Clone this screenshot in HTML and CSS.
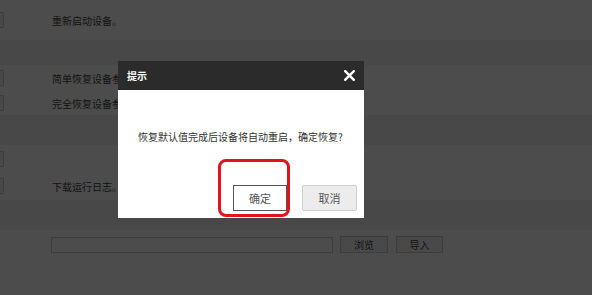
FILE: index.html
```html
<!DOCTYPE html>
<html lang="zh-CN">
<head>
    <meta charset="UTF-8">
    <title>恢复默认值</title>
    <link rel="stylesheet" href="styles.css">
</head>
<body>
    <div class="page">
        <div class="section sec-reboot">
            <div class="row">
                <span class="stub"></span>
                <span class="desc">重新启动设备。</span>
            </div>
        </div>
        <div class="band band-1"></div>

        <div class="section sec-restore">
            <div class="row">
                <span class="stub"></span>
                <span class="desc">简单恢复设备参数。</span>
            </div>
            <div class="row">
                <span class="stub"></span>
                <span class="desc">完全恢复设备参数。</span>
            </div>
        </div>
        <div class="band band-2"></div>

        <div class="section sec-log">
            <div class="row">
                <span class="stub"></span>
                <span class="desc"></span>
            </div>
            <div class="row">
                <span class="stub"></span>
                <span class="desc">下载运行日志。</span>
            </div>
        </div>
        <div class="band band-3"></div>

        <div class="section sec-import">
            <div class="import-row">
                <input type="text" class="file-path">
                <button class="page-btn btn-browse">浏览</button>
                <button class="page-btn btn-import">导入</button>
            </div>
        </div>
    </div>

    <div class="mask"></div>

    <div class="dialog">
        <div class="dialog-head">
            <span class="dialog-title">提示</span>
            <svg class="dialog-close" width="11" height="11" viewBox="0 0 11 11">
                <path d="M1.2 1.2 L9.8 9.8 M9.8 1.2 L1.2 9.8" stroke="#fff" stroke-width="2.4" stroke-linecap="square"/>
            </svg>
        </div>
        <div class="dialog-body">
            <p class="dialog-msg">恢复默认值完成后设备将自动重启，确定恢复?</p>
            <div class="dialog-btns">
                <button class="dlg-btn btn-ok">确定</button>
                <button class="dlg-btn btn-cancel">取消</button>
            </div>
        </div>
        <div class="highlight"></div>
    </div>
</body>
</html>
```

FILE: styles.css
```css
* {
    margin: 0;
    padding: 0;
    box-sizing: border-box;
}

body {
    font-family: "Noto Sans CJK SC", "Noto Sans", sans-serif;
    font-size: 10px;
    color: #555;
    background: #fff;
    width: 592px;
    height: 295px;
    overflow: hidden;
}

.page {
    width: 592px;
    height: 295px;
}

.section {
    background: #fff;
    display: flex;
    flex-direction: column;
}

.band {
    background: #f0f0f0;
}

.sec-reboot {
    height: 40px;
    padding-top: 12px;
}

.band-1 {
    height: 25px;
}

.sec-restore {
    height: 50px;
    padding-top: 5px;
    gap: 9px;
}

.band-2 {
    height: 30px;
}

.sec-log {
    height: 55px;
    padding-top: 6px;
    gap: 11px;
}

.band-3 {
    height: 30px;
}

.sec-import {
    height: 65px;
    padding-top: 6px;
}

.row {
    display: flex;
    align-items: center;
    height: 16px;
    gap: 48px;
}

.stub {
    width: 4px;
    height: 16px;
    background: #f6f6f6;
    border: 1px solid #c8c8c8;
    border-left: none;
    border-radius: 0 2px 2px 0;
}

.desc {
    white-space: nowrap;
    color: #444;
}

.import-row {
    display: flex;
    align-items: center;
    padding-left: 51px;
}

.file-path {
    width: 282px;
    height: 16px;
    border: 1px solid #c8c8c8;
    background: #fff;
}

.page-btn {
    height: 17px;
    border: 1px solid #c8c8c8;
    background: #f4f4f4;
    color: #444;
    font-family: inherit;
    font-size: 10px;
}

.btn-browse {
    width: 48px;
    margin-left: 7px;
}

.btn-import {
    width: 47px;
    margin-left: 8px;
}

.mask {
    position: fixed;
    inset: 0;
    background: rgba(0, 0, 0, 0.7);
}

.dialog {
    position: absolute;
    left: 118px;
    top: 61px;
    width: 246px;
    height: 157px;
    background: #fff;
    display: flex;
    flex-direction: column;
}

.dialog-head {
    height: 29px;
    background: #2b2b2b;
    display: flex;
    align-items: center;
    justify-content: space-between;
    padding: 0 9px 0 9px;
    color: #fff;
}

.dialog-title {
    font-size: 10px;
    font-weight: bold;
}

.dialog-body {
    flex: 1;
    display: flex;
    flex-direction: column;
    padding: 0 7px 7px 20px;
}

.dialog-msg {
    margin-top: 39px;
    font-size: 10px;
    color: #333;
    white-space: nowrap;
}

.dialog-btns {
    margin-top: auto;
    display: flex;
    justify-content: flex-end;
    gap: 15px;
}

.dlg-btn {
    width: 55px;
    height: 26px;
    font-family: inherit;
    font-size: 11px;
    color: #555;
}

.btn-ok {
    width: 54px;
    background: #fff;
    border: 1px solid #555;
}

.btn-cancel {
    background: #ececec;
    border: 1px solid #cfcfcf;
    border-radius: 2px;
}

.highlight {
    position: absolute;
    left: 100px;
    top: 98px;
    width: 72px;
    height: 58px;
    border: 3px solid #e3121b;
    border-radius: 8px;
}
```
